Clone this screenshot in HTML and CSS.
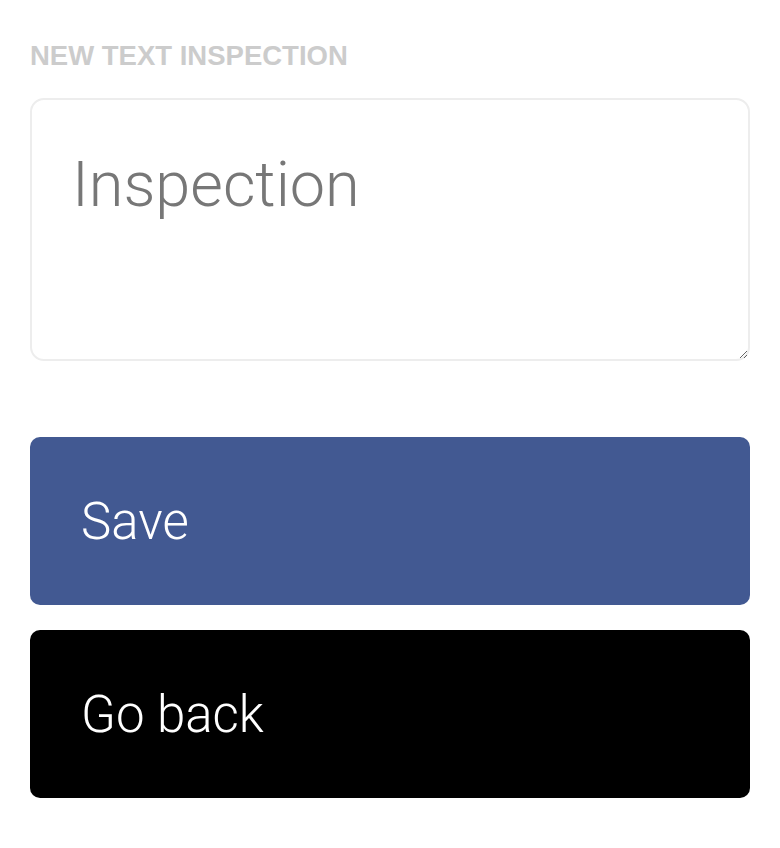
FILE: index.html
```html
<!DOCTYPE html>
<html lang="en">
<head>
<meta charset="utf-8">
<title>New text inspection</title>
<link rel="stylesheet" href="styles.css">
</head>
<body>
<main class="page">
  <label class="label" for="insp">NEW TEXT INSPECTION</label>
  <textarea id="insp" class="field" placeholder="Inspection"></textarea>
  <div class="actions">
    <button class="btn btn-save" type="button">Save</button>
    <button class="btn btn-back" type="button">Go back</button>
  </div>
</main>
</body>
</html>
```
FILE: styles.css
```css
html, body {
  margin: 0;
  padding: 0;
  background: #ffffff;
}
.page {
  padding: 40px 30px 0 30px;
  display: flex;
  flex-direction: column;
}
.label {
  display: block;
  font-family: "Liberation Sans", Arial, sans-serif;
  font-weight: 700;
  font-size: 27.5px;
  line-height: 31px;
  color: #cccccc;
  margin: 0 0 27px 0;
}
.field {
  display: block;
  box-sizing: border-box;
  width: 100%;
  height: 263px;
  margin: 0;
  border: 2px solid #ededed;
  border-radius: 14px;
  padding: 47px 36px 40px 40px;
  font-family: Roboto, "Noto Sans", sans-serif;
  font-weight: 300;
  font-size: 63px;
  line-height: 76px;
  color: #333;
  background: #fff;
  outline: none;
}
.field::placeholder {
  color: #777777;
  opacity: 1;
}
.actions {
  margin-top: 76px;
  display: flex;
  flex-direction: column;
  gap: 25px;
}
.btn {
  box-sizing: border-box;
  height: 168px;
  width: 100%;
  border: none;
  border-radius: 10px;
  padding: 0 0 0 51px;
  display: flex;
  align-items: center;
  text-align: left;
  font-family: Roboto, "Noto Sans", sans-serif;
  font-weight: 300;
  font-size: 51px;
  color: #ffffff;
  cursor: pointer;
}
.btn-save {
  background: #425992;
}
.btn-back {
  background: #000000;
}
```
